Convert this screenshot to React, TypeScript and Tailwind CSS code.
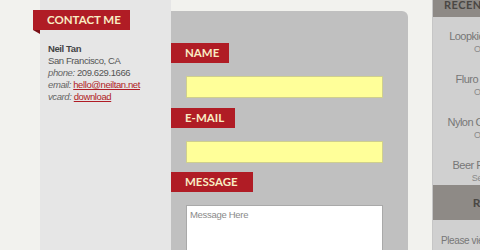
import React from "react";

const posts = [
  { title: "Loopkick Website Live", date: "Oct 24, 2012" },
  { title: "Fluro Sticker Series", date: "Oct 10, 2012" },
  { title: "Nylon Collective T-Shirt", date: "Oct 02, 2012" },
  { title: "Beer Run Gig Poster", date: "Sept 14, 2012" },
];

function Label({ children, w }: { children: React.ReactNode; w: string }) {
  return (
    <div
      className={`flex h-[20px] items-center whitespace-nowrap bg-[#b01c25] pl-[14px] font-['Lato',sans-serif] text-[11.5px] font-bold text-[#f8ecc4] ${w}`}
    >
      {children}
    </div>
  );
}

export default function App() {
  return (
    <div className="flex h-[250px] w-[480px] overflow-hidden bg-[#f2f2ee] font-['Liberation_Sans',Arial,sans-serif]">
      <div className="w-[40px] shrink-0" />

      {/* contact sidebar */}
      <aside className="w-[131px] shrink-0 bg-[#e6e6e6] pt-[10px]">
        <div className="-ml-[7px] w-[97px]">
          <div className="flex h-[20px] items-center whitespace-nowrap bg-[#b01c25] pl-[14px] font-['Lato',sans-serif] text-[11.5px] font-bold text-[#f8ecc4]">
            CONTACT ME
          </div>
          <div className="h-0 w-0 border-l-[7px] border-t-[4px] border-l-transparent border-t-[#7a1016]" />
        </div>
        <div className="mt-[9px] pl-[8px] text-[9.5px] leading-[12px] tracking-[-0.4px] text-[#555]">
          <p className="font-bold text-[#444]">Neil Tan</p>
          <p>San Francisco, CA</p>
          <p>
            <i className="text-[#666]">phone:</i> 209.629.1666
          </p>
          <p>
            <i className="text-[#666]">email:</i>{" "}
            <a className="text-[#b01c25] underline">hello@neiltan.net</a>
          </p>
          <p>
            <i className="text-[#666]">vcard:</i>{" "}
            <a className="text-[#b01c25] underline">download</a>
          </p>
        </div>
      </aside>

      {/* form panel */}
      <main className="mt-[11px] w-[237px] shrink-0 rounded-tr-[6px] bg-[#c0c0c0] pt-[32px]">
        <Label w="w-[58px]">NAME</Label>
        <div className="ml-[15px] mt-[13px] h-[22px] w-[197px] border border-[#cfcf8e] bg-[#ffff99]" />
        <div className="mt-[10px]">
          <Label w="w-[64px]">E-MAIL</Label>
        </div>
        <div className="ml-[15px] mt-[13px] h-[22px] w-[197px] border border-[#cfcf8e] bg-[#ffff99]" />
        <div className="mt-[9px]">
          <Label w="w-[82px]">MESSAGE</Label>
        </div>
        <div className="ml-[15px] mt-[13px] h-[80px] w-[197px] border border-[#a9a9a9] bg-white px-[3px] pt-[2px] text-[9.5px] tracking-[-0.3px] text-[#8a8a8a]">
          Message Here
        </div>
      </main>

      <div className="w-[24px] shrink-0" />

      {/* recent posts sidebar */}
      <aside className="w-[132px] shrink-0 border-l border-[#c6c6c6] bg-[#d0d0d0] text-center">
        <div className="h-[17px] bg-[#8e8a86] text-left">
          <p className="whitespace-nowrap pl-[11px] pt-[1px] font-['Lato',sans-serif] text-[11px] font-bold leading-[8px] tracking-[0.5px] text-[#4a4744]">
            RECENT POSTS
          </p>
        </div>
        <div className="pt-[12px]">
          {posts.map((p) => (
            <div key={p.title} className="h-[43px]">
              <p className="whitespace-nowrap text-[11px] leading-[14px] tracking-[-0.5px] text-[#777]">{p.title}</p>
              <p className="mt-[1px] whitespace-nowrap text-[9px] leading-[10px] tracking-[-0.2px] text-[#8a8a8a]">{p.date}</p>
            </div>
          ))}
        </div>
        <div className="-mt-[16px] flex h-[35px] items-center justify-center bg-[#8e8a86] font-['Lato',sans-serif] text-[12px] font-bold tracking-[0.5px] text-[#4a4744]">
          RESUME
        </div>
        <p className="mt-[15px] whitespace-nowrap pl-[8px] text-left text-[10px] leading-[12px] tracking-[-0.4px] text-[#777]">
          Please view my resume
        </p>
      </aside>
    </div>
  );
}
